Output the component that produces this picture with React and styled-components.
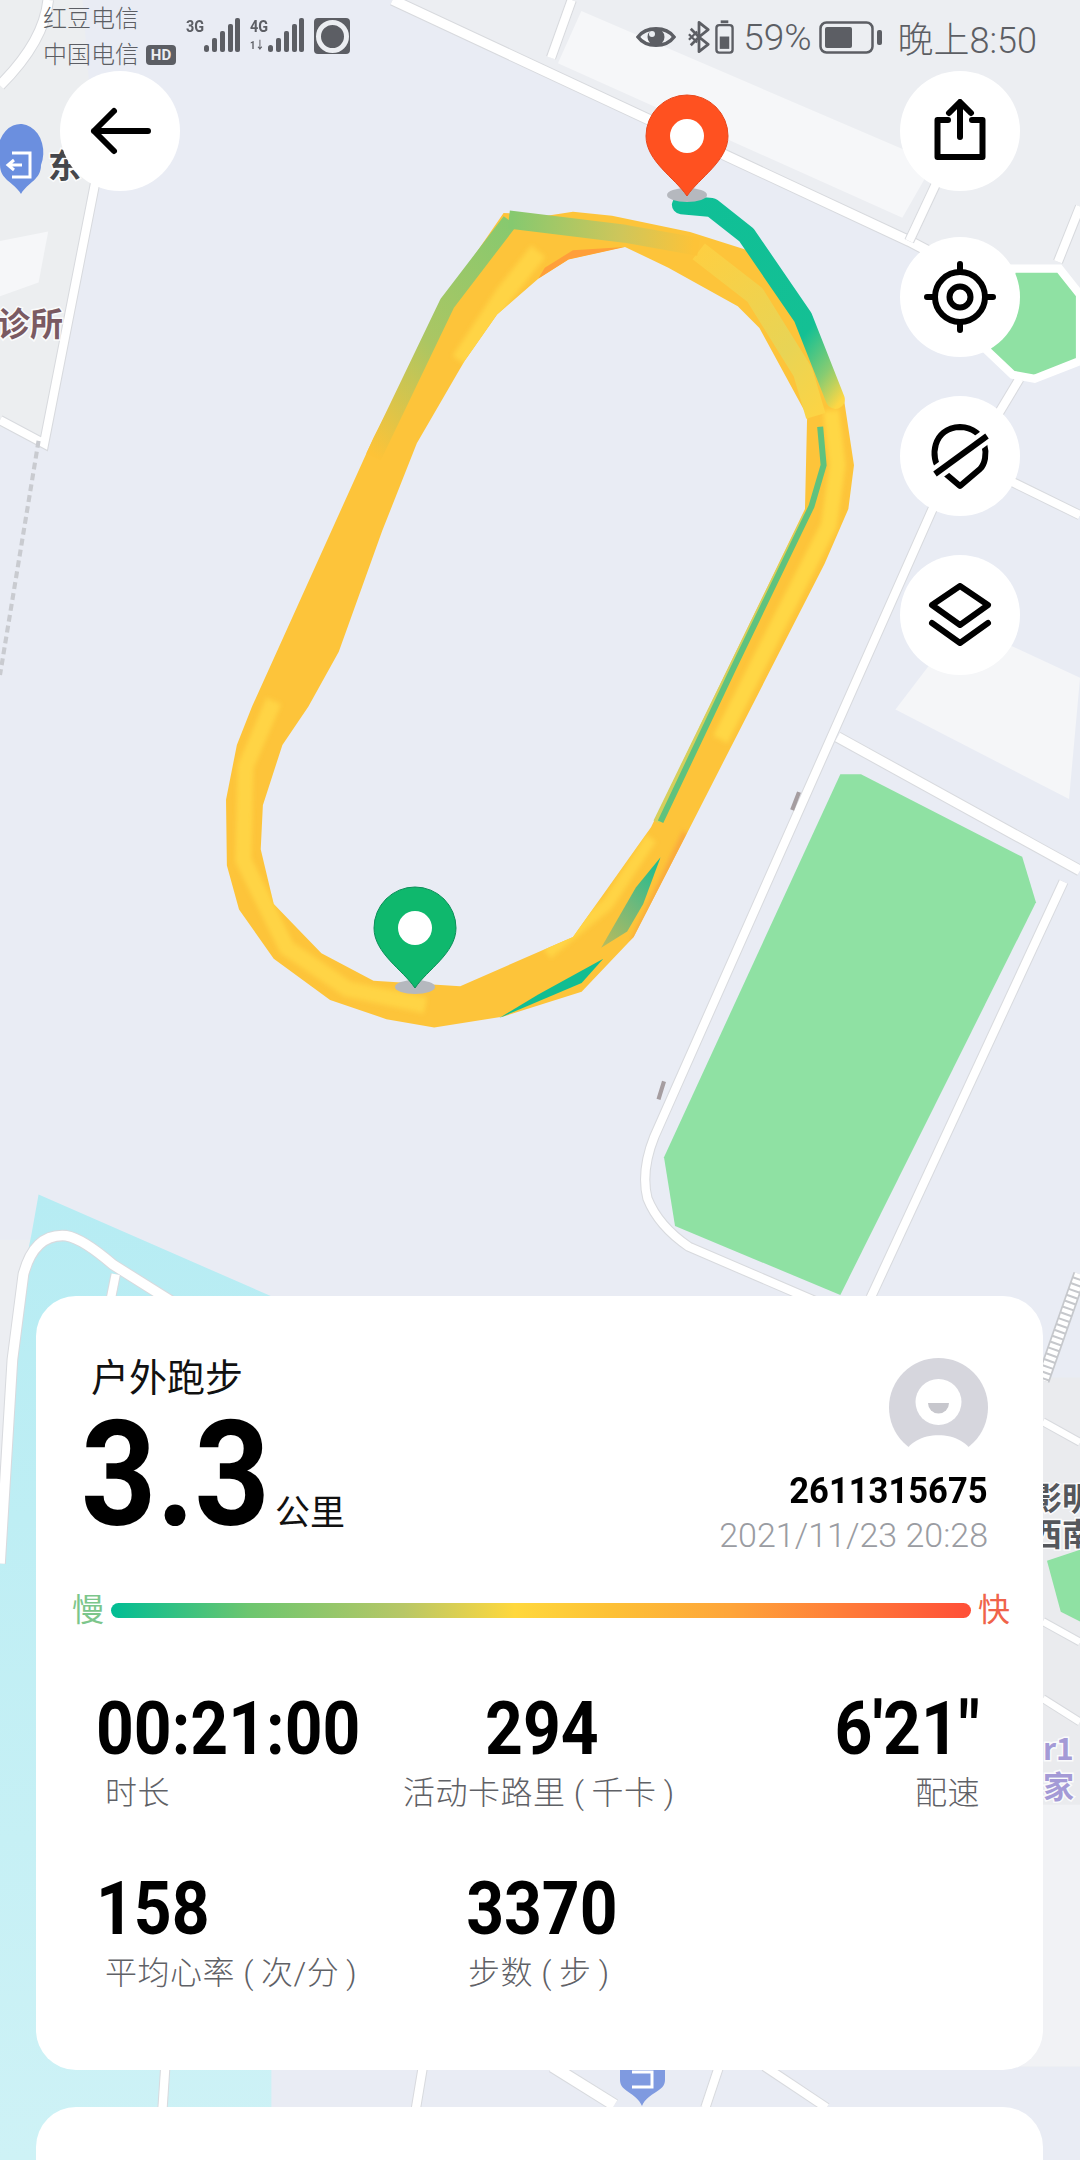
import React from "react";
import styled, { createGlobalStyle } from "styled-components";

const GlobalStyle = createGlobalStyle`
  html, body {
    margin: 0;
    padding: 0;
    background: #e9ecf4;
  }
  * {
    box-sizing: border-box;
  }
`;

const Page = styled.div`
  position: relative;
  width: 1080px;
  height: 2160px;
  overflow: hidden;
  display: flex;
  flex-direction: column;
  background: #e9ecf4;
  font-family: Roboto, "Noto Sans CJK SC", sans-serif;
`;

const MapCanvas = styled.svg`
  position: absolute;
  top: 0;
  left: 0;
  width: 1080px;
  height: 2160px;
`;

const StatusBar = styled.div`
  position: relative;
  height: 71px;
  flex: none;
  display: flex;
  justify-content: space-between;
  padding: 1px 43px 0;
  color: #5c5e64;
`;

const StatusLeft = styled.div`
  display: flex;
  align-items: flex-start;
  gap: 10px;
`;

const Carriers = styled.div`
  font-size: 24px;
  line-height: 36px;
  font-weight: 300;
`;

const CarrierLine = styled.div`
  display: flex;
  align-items: center;
  gap: 7px;
`;

const HdBadge = styled.span`
  width: 30px;
  height: 20px;
  border-radius: 4px;
  background: #5c5e64;
  color: #eceef2;
  font-size: 15px;
  line-height: 20px;
  font-weight: 700;
  text-align: center;
`;

const NetGroup = styled.div`
  display: flex;
  align-items: flex-start;
  margin-top: 17px;
`;

const NetLabel = styled.div`
  width: 18px;
  font-size: 17px;
  line-height: 17px;
  font-weight: 700;
  transform: scaleX(0.85);
  transform-origin: left;
  white-space: nowrap;
`;

const NetSub = styled.div`
  font-size: 11px;
  line-height: 12px;
  margin-top: 5px;
`;

const RecordIcon = styled.div`
  width: 36px;
  height: 36px;
  margin-top: 17px;
  border-radius: 4px;
  background: #5c5e64;
  display: flex;
  align-items: center;
  justify-content: center;
  &::after {
    content: "";
    width: 23px;
    height: 23px;
    border-radius: 50%;
    border: 5px solid #eceef2;
  }
`;

const StatusRight = styled.div`
  display: flex;
  align-items: center;
  height: 70px;
  margin-top: 1px;
`;

const StatusItem = styled.span`
  display: flex;
  margin-left: ${(p) => p.$gap}px;
  font-size: ${(p) => p.$size || 36}px;
  font-weight: 300;
  white-space: nowrap;
`;

const MapArea = styled.div`
  position: relative;
  height: 1225px;
  flex: none;
  display: flex;
  justify-content: space-between;
  align-items: flex-start;
  padding: 0 60px;
`;

const RoundButton = styled.button`
  width: 120px;
  height: 120px;
  border: 0;
  border-radius: 50%;
  padding: 0;
  background: #fff;
  display: flex;
  align-items: center;
  justify-content: center;
`;

const ButtonColumn = styled.div`
  display: flex;
  flex-direction: column;
  gap: 39px;
  & > :first-child {
    margin-bottom: 7px;
  }
`;

const Card = styled.section`
  position: relative;
  flex: none;
  margin: 0 37px 0 36px;
  border-radius: 40px;
  background: #fff;
`;

const SummaryCard = styled(Card)`
  height: 774px;
  padding: 59px 33px 0 36px;
`;

const NextCard = styled(Card)`
  margin-top: 37px;
  height: 300px;
`;

const Header = styled.div`
  display: flex;
  justify-content: space-between;
  padding: 0 22px 0 19px;
`;

const Title = styled.div`
  font-size: 38px;
  line-height: 46px;
  color: #111;
`;

const DistanceRow = styled.div`
  display: flex;
  align-items: baseline;
  margin-top: 21px;
`;

const Distance = styled.div`
  width: 183px;
  margin-left: -10px;
  font-size: 146px;
  line-height: 108px;
  font-weight: 700;
  color: #000;
  transform: scaleX(0.9);
  transform-origin: left;
`;

const Unit = styled.span`
  font-size: 35px;
  color: #111;
  margin-left: 11px;
`;

const Owner = styled.div`
  display: flex;
  flex-direction: column;
  align-items: flex-end;
  margin-top: 3px;
`;

const OwnerId = styled.div`
  margin-top: 16px;
  font-size: 36px;
  line-height: 36px;
  font-weight: 700;
  color: #000;
  transform: scaleX(0.96);
  transform-origin: right;
`;

const OwnerDate = styled.div`
  margin-top: 6px;
  font-size: 34px;
  line-height: 40px;
  font-weight: 300;
  color: #9a9ca2;
`;

const PaceRow = styled.div`
  display: flex;
  align-items: center;
  gap: 7px;
  margin-top: 37px;
`;

const PaceWord = styled.span`
  font-size: 32px;
  line-height: 36px;
  color: ${(p) => p.$color};
`;

const PaceBar = styled.div`
  flex: 1;
  height: 15px;
  border-radius: 8px;
  background: linear-gradient(
    90deg,
    #00bd94 0%,
    #6cc66f 16%,
    #b8c766 34%,
    #ffd83d 47%,
    #fdc136 58%,
    #fea53a 72%,
    #ff7d39 85%,
    #ff4f38 100%
  );
`;

const StatsGrid = styled.div`
  display: grid;
  grid-template-columns: 1fr 1fr 1fr;
  row-gap: 65px;
  margin: 70px 0 0 24px;
  padding-right: 30px;
`;

const Stat = styled.div`
  text-align: ${(p) => p.$align};
`;

const StatValue = styled.div`
  font-size: 75px;
  line-height: 60px;
  font-weight: 700;
  color: #000;
  white-space: nowrap;
  transform: scaleX(0.88);
  transform-origin: ${(p) => p.$align};
`;

const StatLabel = styled.div`
  margin-top: 15px;
  padding-left: ${(p) => (p.$align === "left" ? 9 : 0)}px;
  padding-right: ${(p) => (p.$align === "center" ? 7 : 0)}px;
  font-size: 32px;
  line-height: 40px;
  font-weight: 300;
  letter-spacing: 0.5px;
  color: #5f6166;
  white-space: nowrap;
`;

const MapLabel = styled.text`
  font-family: "Noto Sans CJK SC", sans-serif;
  font-weight: 700;
  font-size: ${(p) => p.$size}px;
  fill: ${(p) => p.$color};
  paint-order: stroke;
  stroke: rgba(255, 255, 255, 0.8);
  stroke-width: 3px;
`;

const roads = [
  { w: 7, d: "M285 0 L660 175 L784 240" },
  { w: 6, d: "M415 0 L400 42" },
  { w: 6, d: "M682 128 L660 175" },
  { w: 6, d: "M784 150 L768 190" },
  { w: 6, d: "M735 350 L784 374" },
  { w: 6, d: "M740 275 L722 305" },
  { w: 6, d: "M690 340 L475 825 Q465 850 470 870 Q478 890 500 905 L600 948" },
  { w: 7, d: "M608 535 L784 632" },
  { w: 6, d: "M772 640 L632 942" },
  { w: 6, d: "M70 128 L32 322 L0 305" },
  { w: 7, d: "M35 0 Q32 30 0 62" },
  { w: 7, d: "M0 1135 L9 987 L17 925 Q25 895 48 897 Q60 899 82 918 L125 945" },
  { w: 6, d: "M84 925 L80 945" },
  { w: 6, d: "M120 1500 L118 1530" },
  { w: 6, d: "M307 1500 L302 1530" },
  { w: 8, d: "M401 1500 L446 1528" },
  { w: 6, d: "M522 1500 L512 1530" },
  { w: 6, d: "M555 1500 L600 1530" },
  { w: 5, d: "M757 1032 L784 1047" },
  { w: 5, d: "M757 1177 L784 1192" },
  { w: 5, d: "M757 1233 L784 1250" },
];

const Road = ({ d, w }) => (
  <>
    <path d={d} fill="none" stroke="#d8dade" strokeWidth={w + 1.5} />
    <path d={d} fill="none" stroke="#fff" strokeWidth={w} />
  </>
);

const routeBand =
  "M700 60 L570 210 L400 470 L120 960 L85 1030 L60 1130 L62 1250 L90 1330 L170 1420 L300 1495 L430 1530 L540 1545 L700 1525 L880 1480 L1000 1380 L1130 1180 L1440 700 L1495 600 L1508 520 L1485 400 L1400 250 L1270 130 L1130 95 L950 65 L860 58 L800 65 Z " +
  "M685 245 L610 330 L500 480 L420 640 L320 860 L250 960 L190 1030 L145 1140 L140 1220 L170 1320 L280 1410 L400 1460 L600 1470 L860 1380 L1040 1180 L1395 600 L1400 430 L1290 270 L1240 230 L1080 160 L980 122 L850 145 L780 180 Z";

const softStroke = {
  fill: "none",
  strokeLinejoin: "round",
  vectorEffect: "non-scaling-stroke",
};

// the route is read off the reference in a 1568 square stretched over 680x860
const Route = () => (
  <svg x="200" y="180" width="680" height="860" viewBox="0 0 1568 1568" preserveAspectRatio="none">
    <defs>
      <linearGradient id="startLeg" gradientUnits="userSpaceOnUse" x1="1110" y1="40" x2="1470" y2="410">
        <stop offset="0" stopColor="#0fbf97" />
        <stop offset="0.72" stopColor="#14c094" />
        <stop offset="0.88" stopColor="#86cc72" />
        <stop offset="1" stopColor="#fed744" />
      </linearGradient>
      <linearGradient id="leftLeg" gradientUnits="userSpaceOnUse" x1="705" y1="60" x2="400" y2="500">
        <stop offset="0" stopColor="#86c96f" />
        <stop offset="0.55" stopColor="#abc663" />
        <stop offset="1" stopColor="#fdc338" />
      </linearGradient>
      <linearGradient id="topLeg" gradientUnits="userSpaceOnUse" x1="720" y1="75" x2="1140" y2="110">
        <stop offset="0" stopColor="#86c96f" />
        <stop offset="0.6" stopColor="#cfc65a" />
        <stop offset="1" stopColor="#fdc338" />
      </linearGradient>
      <linearGradient id="rightTurn" gradientUnits="userSpaceOnUse" x1="1150" y1="130" x2="1420" y2="440">
        <stop offset="0" stopColor="#fdcf42" />
        <stop offset="0.65" stopColor="#e8d455" />
        <stop offset="1" stopColor="#fdd444" />
      </linearGradient>
      <linearGradient id="lowerLeg" gradientUnits="userSpaceOnUse" x1="1062" y1="1235" x2="930" y2="1400">
        <stop offset="0" stopColor="#14bd92" />
        <stop offset="0.5" stopColor="#6db97c" />
        <stop offset="1" stopColor="#b9bb5c" />
      </linearGradient>
      <clipPath id="bandClip">
        <path d={routeBand} clipRule="evenodd" />
      </clipPath>
      <filter id="soft" x="-10%" y="-10%" width="120%" height="120%">
        <feGaussianBlur stdDeviation="5" />
      </filter>
    </defs>
    <path d={routeBand} fill="#fdc43a" fillRule="evenodd" />
    <g clipPath="url(#bandClip)">
      <g filter="url(#soft)">
        <path d="M170 950 L105 1070 L100 1240 L200 1400 L340 1475 L520 1505" stroke="#ffd444" strokeWidth="16" {...softStroke} />
        <path d="M1455 420 L1470 520 L1450 630 L1340 800 L1200 1020" stroke="#ffd744" strokeWidth="16" {...softStroke} />
        <path d="M780 130 L700 210 L600 330" stroke="#ffd444" strokeWidth="18" {...softStroke} />
        <path d="M800 1410 L940 1320 L1040 1200" stroke="#ffd444" strokeWidth="12" {...softStroke} />
        <path d="M1000 1390 L1120 1190" stroke="#f9a93c" strokeWidth="7" {...softStroke} />
      </g>
      <path d="M780 180 L850 145 L980 122 L860 128 L795 160 Z" fill="#ff9f3a" />
    </g>
    <path d="M1150 130 L1280 210 L1390 350 L1420 430" stroke="url(#rightTurn)" strokeWidth="20" {...softStroke} />
    <path d="M1398 610 L1052 1170" stroke="#d6cf5c" strokeWidth="6" {...softStroke} />
    <path d="M1430 450 L1438 520 L1410 595 L1230 890 L1062 1170" stroke="#5fc27e" strokeWidth="6" {...softStroke} />
    <path d="M690 1528 L880 1464 L930 1420 L780 1485 Z" fill="#12bd92" />
    <path d="M1062 1235 L1005 1290 L925 1400 L985 1370 L1022 1320 Z" fill="url(#lowerLeg)" />
    <path d="M1110 45 L1180 50 L1260 100 L1390 250 L1465 400" stroke="url(#startLeg)" strokeWidth="19" strokeLinecap="round" {...softStroke} />
    <path d="M715 75 L570 225 L400 505" stroke="url(#leftLeg)" strokeWidth="16" {...softStroke} />
    <path d="M712 72 L980 98 L1150 122" stroke="url(#topLeg)" strokeWidth="18" {...softStroke} />
  </svg>
);

const Pin = ({ x, tipY, color, edge }) => (
  <g transform={`translate(${x} ${tipY})`}>
    <ellipse cy="-1" rx="20" ry="7" fill="#b5b8be" />
    <path
      d="M0 0 C-12 -18 -41 -35 -41 -60 A41 41 0 0 1 41 -60 C41 -35 12 -18 0 0 Z"
      fill={color}
      stroke={edge}
      strokeWidth="1"
    />
    <circle cy="-60" r="17" fill="#fff" />
  </g>
);

const MapBackground = () => (
  <MapCanvas viewBox="0 0 1080 2160">
    <defs>
      <linearGradient id="water" x1="0" y1="0" x2="0" y2="1">
        <stop offset="0" stopColor="#b6ecf3" />
        <stop offset="1" stopColor="#cef2f6" />
      </linearGradient>
    </defs>
    <g transform="scale(1.3776)">
      <path d="M0 0 H285 L660 175 L784 240 V0 Z" fill="#eceef2" />
      <path d="M0 0 H60 L70 130 L30 320 L0 310 Z" fill="#eceef0" />
      <path d="M422 8 L405 46 L655 158 L678 118 Z" fill="#f6f7f9" />
      <path d="M0 175 L35 168 L28 205 L0 215 Z" fill="#f6f7f9" />
      <path d="M650 515 L698 452 L784 492 L776 580 Z" fill="#f5f6f8" />
      <path d="M0 900 H30 V1568 H0 Z" fill="#eceef2" />
      <path d="M505 1500 H784 V1000 H740 V1500 Z" fill="#eaebee" />
      <path d="M740 1310 H784 V1500 H740 Z" fill="#f1f2f5" />
      <path d="M28 867 L197 941 V1530 H499 V1568 H0 V1135 L17 925 L23 895 Z" fill="url(#water)" />
      <path d="M784 925 L757 1002" fill="none" stroke="#c6c8cc" strokeWidth="10" />
      <path d="M784 925 L757 1002" fill="none" stroke="#fff" strokeWidth="7.5" strokeDasharray="3 1.5" />
      {roads.map((r) => (
        <Road key={r.d} {...r} />
      ))}
      <path d="M28 320 L0 490" fill="none" stroke="#c9cbd0" strokeWidth="3" strokeDasharray="5 3" />
      <path
        d="M610 562 L625 562 L742 622 L752 655 L610 940 L490 890 L482 840 Z"
        fill="#8fe1a3"
      />
      <path
        d="M735 195 L769 195 L784 214 V262 L751 275 L735 272 L716 254 Z"
        fill="#8fe1a3"
        stroke="#fff"
        strokeWidth="6"
      />
      <path d="M760 1133 L784 1125 V1177 L770 1170 Z" fill="#8fe1a3" />
      <path d="M580 575 L575 588 M482 785 L478 798" stroke="#a59da0" strokeWidth="3" />
    </g>

    <path d="M0 140 A20 25 0 0 1 41 165 C41 180 28 182 21 194 C14 182 0 180 0 165 Z" fill="#6b8fdf" />
    <path d="M12 153 H30 V177 H12 M22 165 H8 M14 160 L8 165 L14 170" fill="none" stroke="#fff" strokeWidth="3" />
    <MapLabel x="48" y="178" $size={33} $color="#45474c">东</MapLabel>
    <MapLabel x="-3" y="336" $size={33} $color="#7a5a62">诊所</MapLabel>
    <MapLabel x="1030" y="1510" $size={32} $color="#55575c">影明</MapLabel>
    <MapLabel x="1030" y="1546" $size={32} $color="#55575c">西南</MapLabel>
    <MapLabel x="1043" y="1760" $size={30} $color="#a49ad6">r1</MapLabel>
    <MapLabel x="1043" y="1798" $size={31} $color="#a49ad6">家</MapLabel>
    <path d="M620 2060 H665 V2080 C665 2092 648 2092 642 2106 C636 2092 620 2092 620 2080 Z" fill="#7f9ae0" />
    <path d="M632 2072 H652 V2087 H632" fill="none" stroke="#fff" strokeWidth="3" />

    <Route />
    <Pin x={687} tipY={196} color="#ff5120" edge="#e8481c" />
    <Pin x={415} tipY={988} color="#0fb86d" edge="#0b8f58" />
  </MapCanvas>
);

const Bars = () => (
  <svg width="36" height="35" viewBox="0 0 36 35" fill="#5c5e64">
    <rect x="0" y="27" width="5" height="7" rx="2.5" />
    <rect x="8" y="20" width="5" height="14" rx="2" />
    <rect x="16" y="13" width="5" height="21" rx="2" />
    <rect x="24" y="6" width="5" height="28" rx="2" />
    <rect x="31" y="0" width="5" height="34" rx="2" />
  </svg>
);

const EyeIcon = () => (
  <svg width="40" height="28" viewBox="0 0 40 28">
    <path d="M2 14 C10 3 30 3 38 14 C30 25 10 25 2 14 Z" fill="none" stroke="#5c5e64" strokeWidth="3.5" />
    <circle cx="20" cy="14" r="8.5" fill="#5c5e64" />
    <circle cx="16" cy="11" r="3" fill="#e9ecf1" />
  </svg>
);

const BluetoothIcon = () => (
  <svg width="22" height="34" viewBox="0 0 24 36">
    <path
      d="M3 9 L12 18 L3 27 M12 2 L22 10 L12 18 L22 26 L12 34 Z"
      fill="none"
      stroke="#5c5e64"
      strokeWidth="3"
      strokeLinejoin="round"
    />
    <path d="M1 15 L10 24 M1 21 L10 12" stroke="#5c5e64" strokeWidth="2.5" />
  </svg>
);

const SmallBattery = () => (
  <svg width="19" height="34" viewBox="0 0 20 35">
    <rect x="6" y="0" width="8" height="3" fill="#5c5e64" />
    <rect x="1.5" y="5" width="17" height="29" rx="3" fill="none" stroke="#5c5e64" strokeWidth="2.5" />
    <rect x="5" y="17" width="10" height="13" fill="#5c5e64" />
  </svg>
);

const Battery = () => (
  <svg width="63" height="33" viewBox="0 0 63 33">
    <rect x="1.5" y="1.5" width="52" height="30" rx="6" fill="none" stroke="#5c5e64" strokeWidth="2.5" />
    <rect x="6" y="6" width="27" height="21" rx="2" fill="#5c5e64" />
    <rect x="58" y="9" width="5" height="15" rx="2" fill="#5c5e64" />
  </svg>
);

const iconStroke = {
  fill: "none",
  stroke: "#000",
  strokeWidth: 6,
  strokeLinecap: "round",
  strokeLinejoin: "round",
};

const BackIcon = () => (
  <svg width="64" height="64" viewBox="0 0 64 64" {...iconStroke}>
    <path d="M60 32 H6 M26 12 L6 32 L26 52" />
  </svg>
);

const ShareIcon = () => (
  <svg width="64" height="64" viewBox="0 0 64 64" {...iconStroke}>
    <path d="M20 21 H9.5 V58 H54.5 V21 H44 M32 38 V4 M21 14 L32 3 L43 14" />
  </svg>
);

const TargetIcon = () => (
  <svg width="72" height="72" viewBox="0 0 72 72" {...iconStroke}>
    <circle cx="36" cy="36" r="25" />
    <circle cx="36" cy="36" r="10.5" />
    <path d="M36 3 V11 M36 61 V69 M3 36 H11 M61 36 H69" />
  </svg>
);

const HidePinIcon = () => (
  <svg width="64" height="68" viewBox="0 0 64 68" {...iconStroke}>
    <path d="M32 64 L12 47 C2 37 4 6 32 5 C60 6 62 37 52 47 Z" strokeLinecap="butt" />
    <path d="M7 52 L59 14" stroke="#fff" strokeWidth="15" strokeLinecap="butt" />
    <path d="M7 52 L59 14" strokeLinecap="butt" />
  </svg>
);

const LayersIcon = () => (
  <svg width="64" height="64" viewBox="0 0 64 64" {...iconStroke}>
    <path d="M32 3 L60 22 L32 42 L4 22 Z" />
    <path d="M4 40 L32 60 L60 40" />
  </svg>
);

const Avatar = () => (
  <svg width="99" height="99" viewBox="0 0 99 99">
    <circle cx="49.5" cy="49.5" r="49.5" fill="#d6d6dd" />
    <circle cx="49.5" cy="44" r="23" fill="#fff" />
    <path d="M39 45 H60 A10.5 10.5 0 0 1 39 45 Z" fill="#c7c7cd" />
    <path d="M14 99 C22 70 77 70 85 99 Z" fill="#fff" />
  </svg>
);

const stats = [
  { value: "00:21:00", label: "时长", align: "left" },
  { value: "294", label: "活动卡路里 (\u2009千卡\u2009)", align: "center" },
  { value: "6'21\"", label: "配速", align: "right" },
  { value: "158", label: "平均心率 (\u2009次/分\u2009)", align: "left" },
  { value: "3370", label: "步数 (\u2009步\u2009)", align: "center" },
];

const App = () => {
  return (
    <Page>
      <GlobalStyle />
      <MapBackground />
      <StatusBar>
        <StatusLeft>
          <Carriers>
            <CarrierLine>红豆电信</CarrierLine>
            <CarrierLine>
              中国电信
              <HdBadge>HD</HdBadge>
            </CarrierLine>
          </Carriers>
          <NetGroup>
            <NetLabel>3G</NetLabel>
            <Bars />
          </NetGroup>
          <NetGroup>
            <NetLabel>
              4G
              <NetSub>1↓</NetSub>
            </NetLabel>
            <Bars />
          </NetGroup>
          <RecordIcon />
        </StatusLeft>
        <StatusRight>
          <EyeIcon />
          <StatusItem $gap={12}>
            <BluetoothIcon />
          </StatusItem>
          <StatusItem $gap={5}>
            <SmallBattery />
          </StatusItem>
          <StatusItem $gap={9} $size={37}>59%</StatusItem>
          <StatusItem $gap={7}>
            <Battery />
          </StatusItem>
          <StatusItem $gap={16}>晚上8:50</StatusItem>
        </StatusRight>
      </StatusBar>
      <MapArea>
        <RoundButton aria-label="返回">
          <BackIcon />
        </RoundButton>
        <ButtonColumn>
          <RoundButton aria-label="分享">
            <ShareIcon />
          </RoundButton>
          <RoundButton aria-label="定位">
            <TargetIcon />
          </RoundButton>
          <RoundButton aria-label="隐藏">
            <HidePinIcon />
          </RoundButton>
          <RoundButton aria-label="图层">
            <LayersIcon />
          </RoundButton>
        </ButtonColumn>
      </MapArea>
      <SummaryCard>
        <Header>
          <div>
            <Title>户外跑步</Title>
            <DistanceRow>
              <Distance>3.3</Distance>
              <Unit>公里</Unit>
            </DistanceRow>
          </div>
          <Owner>
            <Avatar />
            <OwnerId>2611315675</OwnerId>
            <OwnerDate>2021/11/23 20:28</OwnerDate>
          </Owner>
        </Header>
        <PaceRow>
          <PaceWord $color="#7cc68b">慢</PaceWord>
          <PaceBar />
          <PaceWord $color="#f0634a">快</PaceWord>
        </PaceRow>
        <StatsGrid>
          {stats.map((s) => (
            <Stat key={s.label} $align={s.align}>
              <StatValue $align={s.align}>{s.value}</StatValue>
              <StatLabel $align={s.align}>{s.label}</StatLabel>
            </Stat>
          ))}
        </StatsGrid>
      </SummaryCard>
      <NextCard />
    </Page>
  );
};

export default App;
